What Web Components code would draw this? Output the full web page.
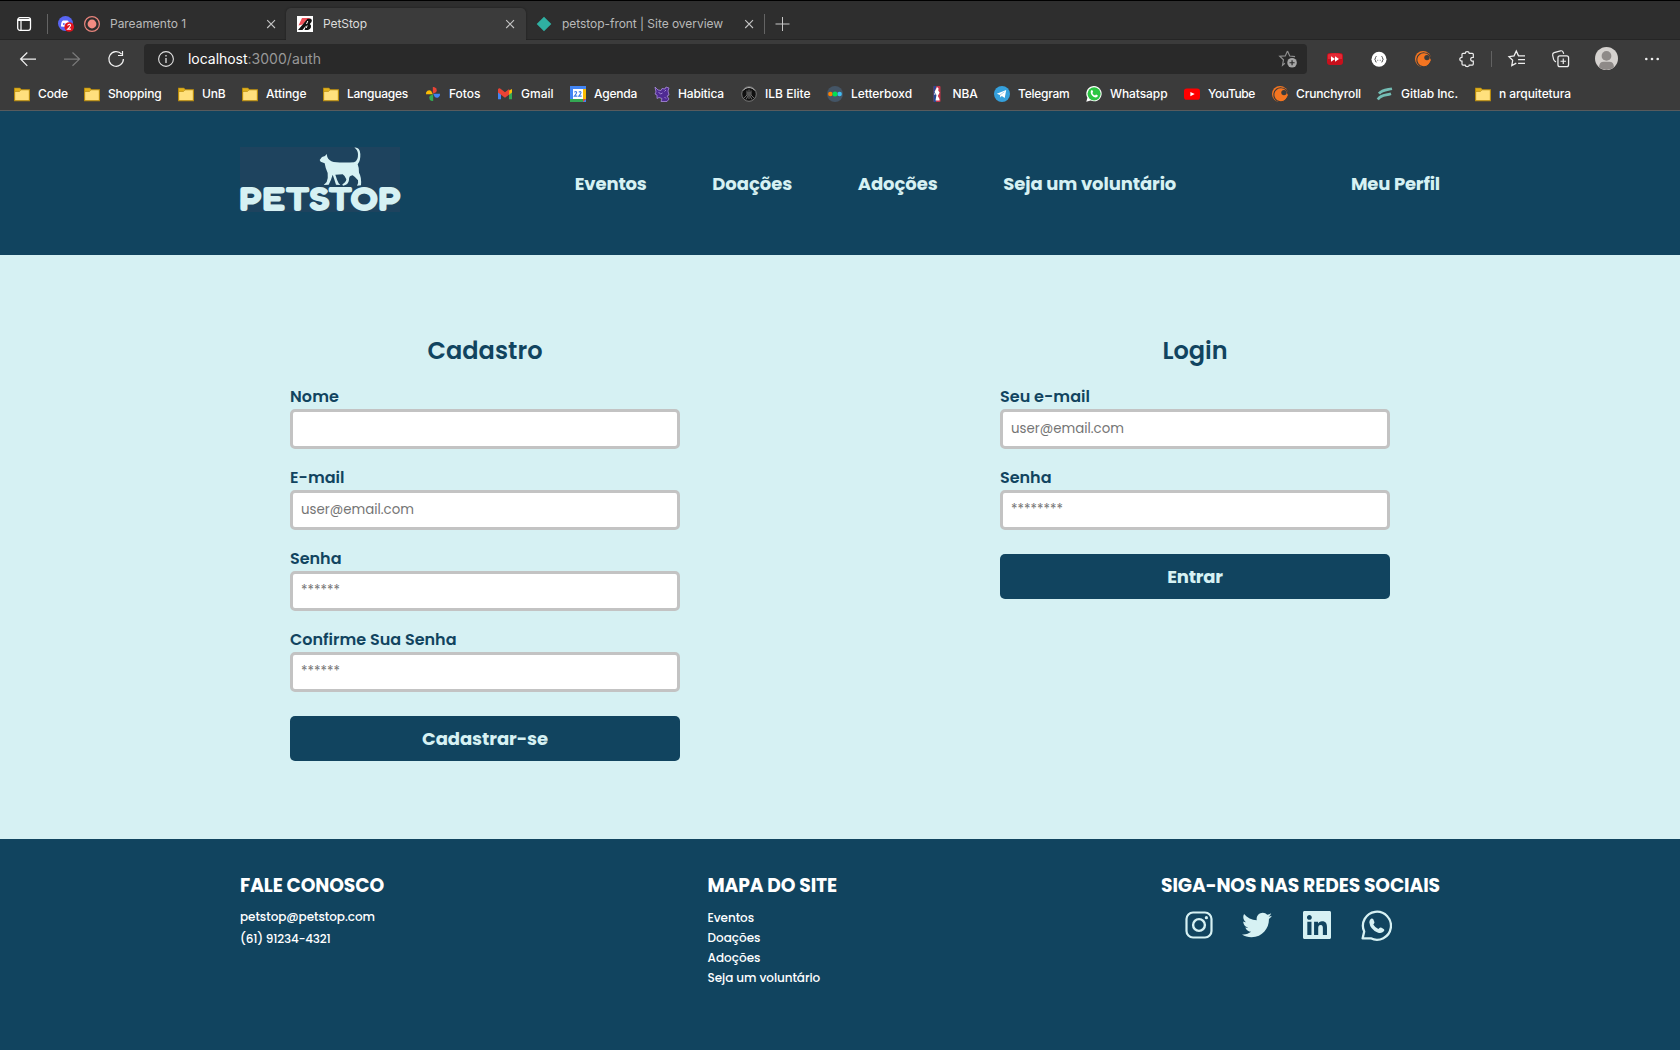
<!DOCTYPE html>
<html lang="pt-BR">
<head>
<meta charset="utf-8">
<title>PetStop</title>
<style>
html,body{margin:0;height:100%;overflow:hidden}
body{font-family:Poppins,Inter,"Open Sans",sans-serif}
</style>
</head>
<body>
<pet-window></pet-window>
<script>
const make = (name, html, after) => customElements.define(name, class extends HTMLElement {
  connectedCallback() {
    if (this.shadowRoot) return;
    this.attachShadow({mode: 'open'}).innerHTML = typeof html === 'function' ? html(this) : html;
    if (after) after(this);
  }
});
const svg = (w, h, body, extra = '') => `<svg width="${w}" height="${h}" viewBox="0 0 ${w} ${h}" fill="none" ${extra}>${body}</svg>`;
const crunchy = '<circle cx="8" cy="8" r="8" fill="#f47521"/><path d="M15.6 10.4A7 7 0 1 1 9.5 1.8a6.7 6.7 0 0 1 6.4 6.8" fill="none" stroke="#3b3b3b" stroke-width="1.1"/><circle cx="9.4" cy="8.8" r="5.8" fill="#f47521"/><circle cx="12" cy="6.6" r="2.7" fill="#3b3b3b"/>';
const icons = {
  folder: '<path d="M.6 2.2h5.2l1.4 1.6h8.2v10.9H.6z" fill="#ffe07d" stroke="#b98b0b" stroke-width="1.1"/><path d="M1 2.6h4.6l1 1.2-1.4 1.5H1z" fill="#e3b21a"/><path d="M1 5.4h4.6l1.3-1.6" stroke="#b98b0b" stroke-width=".8" fill="none"/>',
  fotos: '<path d="M7.800 1a3.300 3.300 0 0 1 3.300 5.200L7.800 7.800z" fill="#ea4335"/><path d="M15 7.800a3.300 3.300 0 0 1-5.200 3.300L8.200 7.800z" fill="#4285f4"/><path d="M8.200 15a3.300 3.300 0 0 1-3.300-5.200L8.200 8.200z" fill="#34a853"/><path d="M1 8.200a3.300 3.300 0 0 1 5.200-3.300L7.800 8.200z" fill="#fbbc04"/>',
  gmail: '<path d="M1 3.5v9.7h3V7z" fill="#4285f4"/><path d="M12 7v6.2h3V3.5z" fill="#34a853"/><path d="M12 4.5l3-1.5v3.4L12 8.8z" fill="#fbbc04"/><path d="M1 3.2c.8-1.2 2-1 2.8-.2L8 6.3l4.2-3.3v5.6L8 11.700 1 6.400z" fill="#ea4335"/>',
  agenda: '<path d="M0 0h16v16H0z" fill="#4285f4"/><path d="M13 3h3v10h-3z" fill="#fbbc04"/><path d="M3 13h10v3H0v-3z" fill="#34a853"/><path d="M13 13h3l-3 3z" fill="#ea4335"/><path d="M3 3h10v10H3z" fill="#fff"/><path d="M4.400 6.200q1.600-1.300 2.200 0 .3 1-2.200 3.900h2.900M8.800 6.200q1.600-1.300 2.200 0 .3 1-2.200 3.900h2.900" stroke="#3f7de8" stroke-width="1.100"/>',
  habitica: '<path d="M1 1l3 3 3 .5 1-2 3 .5 1-2 3 1-1 3 1 4-2 1 2 3-2 2.500H7l1-3-3-1-2 1V9L1 8l1-2z" fill="#4f2a93" stroke="#a98bdc" stroke-width=".8"/><path d="M4.500 6l2 2 2-1M10.500 5.500L12 4M10.500 11l1.500 1.500" stroke="#b59ce2" stroke-width=".8"/>',
  ilb: '<circle cx="8" cy="8" r="7.300" fill="#101010" stroke="#777" /><path d="M2.300 4.500A7 7 0 0 1 13.700 4.500" stroke="#ccc" stroke-width=".9"/><path d="M8 3.500V13M6 4.500V9l-3 3M10 4.500V9l3 3M7 6v4l-2 3.500M9 6v4l2 3.500" stroke="#777" stroke-width=".9"/>',
  letterboxd: '<circle cx="8" cy="8" r="8" fill="#445566"/><circle cx="3.400" cy="8" r="2.300" fill="#ff8000"/><circle cx="12.600" cy="8" r="2.300" fill="#40bcf4"/><circle cx="8" cy="8" r="2.500" fill="#00e054"/>',
  nba: '<rect x="4.500" y="0" width="7" height="16" rx="1" fill="#c8344a"/><path d="M5.500 0h2L6 5l2 5-1 6H5.500q-1 0-1-1V1q0-1 1-1z" fill="#254a95"/><path d="M8 1l1.600 1.500-.4 2 1.400 2-1.800 3.500L10.500 13v1.500H6.500L7.500 9 5.500 6z" fill="#fff"/><circle cx="5.800" cy="8" r=".8" fill="#fff"/>',
  telegram: '<circle cx="8" cy="8" r="8" fill="#35a0dc"/><path d="M2.800 7.700l9.400-3.800-1.500 8.200-2.900-2.100-1.500 1.500-.3-2.600z" fill="#fff"/><path d="M6 8.900l4.400-3" stroke="#8fc6e8" stroke-width=".7"/>',
  whatsapp: '<path d="M.3 15.700l1.100-4A7.700 7.700 0 1 1 4.600 14.600z" fill="#fff"/><circle cx="8.100" cy="7.800" r="6.600" fill="#2bc542"/><path d="M4.800 5.200c1-2 1.800-1 2.300.7l-.8 1.100q1 2 2.700 2.600l1-1c2 .8 2.500 1.200 1 2.500-2.500 1.500-7-2.500-6.200-5.900z" fill="#fff"/>',
  youtube: '<rect x="0" y="2.500" width="16" height="11.200" rx="2.800" fill="#f00"/><path d="M6.400 5.900l4.300 2.200-4.300 2.200z" fill="#fff"/>',
  crunchy,
  gitlab: '<path d="M2 7.600C5 3.800 9 4 15 2.700M.8 13.400c3.500-5.200 8-3.700 13.200-5.600" stroke="#74bdb5" stroke-width="2.700"/>',
  discord: '<circle cx="7.500" cy="7.500" r="7.500" fill="#5865f2"/><path d="M3 10.500Q3 5.500 5 4.600h4.600Q11.500 6 11.800 9L8 11z" fill="#fff"/><circle cx="5.800" cy="8" r="1" fill="#5865f2"/><circle cx="11.200" cy="11" r="4.800" fill="#e0131d"/><path d="M9.700 9.600q.3-1.400 1.700-1.300 1.400.3 1 1.600-.5 1.200-2.700 3.200h3.200" stroke="#fff" stroke-width="1.100" fill="none"/>',
  record: '<circle cx="8" cy="8" r="7.400" stroke="#e8847c" stroke-width="1.200"/><circle cx="8" cy="8" r="4.400" fill="#f28b82"/>',
  bstone: '<path d="M0 0h16v16H0z" fill="#fff"/><path d="M5 2h8.500L9 5.500 5.500 8.500 1.500 9.500z" fill="#f0515a"/><path d="M10.500 2.800H14Q15.500 4 14.500 6L12.800 8q1.700 1 1.200 3.200Q13 14 11 14H7.500l1.600-4.500L5.500 14H1z" fill="#111"/><path d="M10.800 5L9.500 8M10.200 9.500L9.200 12" stroke="#fff" stroke-width="1"/>',
  diamond: '<path d="M8 .7L15.300 8 8 15.300.7 8z" fill="#2fb0a2"/>',
  close: '<path d="M4.200 4.200l7.800 7.800M12 4.200L4.200 12" stroke="#c4c4c4" stroke-width="1.100"/>',
  plus: '<path d="M7.500 1v14M.5 8h14" stroke="#c8c8c8" stroke-width="1"/>',
  panel: '<rect x="1.700" y="1.700" width="12.800" height="12.600" rx="2.200" stroke="#fff" stroke-width="1.300"/><path d="M2 3h12v2H2z" fill="#fff"/><path d="M5 4v10" stroke="#fff" stroke-width="1.200"/>',
  back: '<path d="M7.300 1.500L.6 8l6.700 6.800M.6 8.200h15.400" stroke="#f2f2f2" stroke-width="1.200"/>',
  forward: '<path d="M8.500 1.500l7 6.600-7 6.700M15.500 8.200H0" stroke="#7b7b7b" stroke-width="1.200"/>',
  reload: '<path d="M13.600 3.200A7.300 7.300 0 1 0 15.400 8M14.500 0v4.500H10" stroke="#f2f2f2" stroke-width="1.200"/>',
  info: '<circle cx="8" cy="8" r="7.400" stroke="#e0e0e0" stroke-width="1.100"/><path d="M8 7v5M8 4v1.500" stroke="#d5d5d5" stroke-width="1.400"/>',
  star: '<path d="M8 1l2.100 4.700 5 .6M5.500 12.500L3.300 14.300l.9-5.100L.7 5.900l5.200-.3L8 1" stroke="#8f8f8f" stroke-width="1.100"/><circle cx="12.300" cy="12" r="4.500" fill="#a6a6a6"/><path d="M12.300 9.600v4.800M9.900 12h4.800" stroke="#292929" stroke-width="1.100"/>',
  ff: '<rect y="2" width="16" height="12" rx="3" fill="#c8101c"/><path d="M1 3.500Q8 1 15 3.500V8H1z" fill="#ee3541" opacity=".7"/><path d="M4 5.300l4 2.700-4 2.700zM8 5.300L12 8l-4 2.700z" fill="#fff"/>',
  json: '<circle cx="8" cy="8.300" r="7.500" fill="#fff"/><path d="M5.600 5.500q-1.300 0-1.100 1.200 0 1.600-.9 1.600.9 0 .9 1.600-.2 1.200 1.100 1.200M10.400 5.500q1.300 0 1.100 1.200 0 1.600.9 1.600-.9 0-.9 1.600.2 1.200-1.100 1.200M6.400 9.300h.8M8.800 9.300h.8" stroke="#555" stroke-width="1"/>',
  puzzle: '<path d="M4 2.300h2.200q.1-1.600 2-1.600t2 1.600h3.100q1 0 1 1v3q-2.600-.2-2.600 1.900t2.600 1.900v3q0 1-1 1h-3q0 1.500-2 1.500t-2.100-1.500H4q-1 0-1-1v-3Q.8 10 .8 8.200T3 6.300v-3q0-1 1-1z" stroke="#eee" stroke-width="1.200"/>',
  favs: '<path d="M9.800 5.300L7.800 1 5.700 5.500.9 6.200l3.500 3.500-.8 4.900 4.200-2.300M9.500 5.600h6.500M9.500 9H16M9.500 12.500H16" stroke="#eee" stroke-width="1.200"/>',
  collections: '<rect x="5.600" y="5.600" width="10" height="10" rx="1.800" stroke="#eee" stroke-width="1.200"/><path d="M10.600 8v5.200M8 10.600h5.200M3.800 11.200Q2 10.600 1.500 8.800L.6 4.800Q.4 3 2 2.500L8 .8q1.900-.4 2.500 1.300l.5 1.600" stroke="#eee" stroke-width="1.100"/>',
  avatar: '<circle cx="8" cy="8" r="8" fill="#d5d2cf"/><circle cx="8" cy="6.200" r="3.400" fill="#8e8a88"/><path d="M2.800 14Q3 10.200 6 10.200h4Q13 10.200 13.200 14 8 18 2.800 14z" fill="#8e8a88"/>',
  dots: '<circle cx="2.300" cy="8" r="1.300" fill="#eee"/><circle cx="8" cy="8" r="1.300" fill="#eee"/><circle cx="13.700" cy="8" r="1.300" fill="#eee"/>'
};
const ic = (n, ml = 0, s = 16) => `<ui-icon name="${n}" size="${s}" style="margin-left:${ml}px"></ui-icon>`;
const fit = (t, w, ml = 0) => `<fit-text w="${w}" style="margin-left:${ml}px">${t}</fit-text>`;

make('tab-strip', `<style>
:host{display:flex;height:39px;background:#2e2e2e;font:400 12px Inter,sans-serif;color:#b9b9b9;box-shadow:inset 0 -1px #252525}
.t{display:flex;align-items:center;height:32px;margin-top:7px;box-sizing:border-box;padding-bottom:1px}
.a{width:240px;height:32px;background:#3b3b3b;border-radius:5px 5px 0 0;color:#dcdcdc;box-shadow:0 0 2px #1c1c1c;clip-path:inset(-3px -3px 0 -3px)}
i{width:1px;height:20px;background:#646464}
</style>
<div class="t" style="width:286px">${ic('panel',16)}<i style="margin-left:15px"></i>${ic('discord',10)}${ic('record',10)}${fit('Pareamento 1',76,10)}${ic('close',76.500)}</div>
<div class="t a">${ic('bstone',11)}${fit('PetStop',44,10)}${ic('close',134.500)}</div>
<div class="t">${ic('diamond',10)}${fit('petstop-front | Site overview',161,10)}${ic('close',17.500)}<i style="margin-left:7.500px"></i>${ic('plus',10)}</div>`);

make('nav-bar', `<style>
:host{display:flex;align-items:center;box-sizing:border-box;height:38px;padding-bottom:1px;background:#3b3b3b;font:400 14px Inter,sans-serif}
.o{display:flex;align-items:center;width:1163px;height:30px;border-radius:4px;background:#292929;margin-left:20px;color:#fff}
.g{color:#989898}i{width:1px;height:16px;background:#626262;margin-left:15px}
</style>
${ic('back',20)}${ic('forward',28)}${ic('reload',28)}
<div class="o">${ic('info',14)}${fit('localhost',59.500,14)}<span class="g">${fit(':3000/auth',73.500)}</span><ui-icon name="star" size="17" style="margin-left:auto;margin-right:11px"></ui-icon></div>
${ic('ff',20)}${ic('json',28)}${ic('crunchy',28)}${ic('puzzle',28)}<i style="margin-left:16px"></i>${ic('favs',16,17)}${ic('collections',26.500,17)}${ic('avatar',26,23)}${ic('dots',26)}`);

const marks = [['folder','Code',14,30],['folder','Shopping',84,53.500],['folder','UnB',178,23.500],['folder','Attinge',242,40.500],['folder','Languages',323,61],['fotos','Fotos',425,31.500],['gmail','Gmail',497,32.500],['agenda','Agenda',570,43],['habitica','Habitica',654,46],['ilb','ILB Elite',741,45.500],['letterboxd','Letterboxd',827,61],['nba','NBA',928.500,25],['telegram','Telegram',994,51.500],['whatsapp','Whatsapp',1086,57.500],['youtube','YouTube',1184,47],['crunchy','Crunchyroll',1272,65],['gitlab','Gitlab Inc.',1377,57],['folder','n arquitetura',1475,72]];
make('bookmark-bar', `<style>
:host{display:flex;align-items:center;height:33px;padding:0 0 1px 14px;box-sizing:border-box;background:#3b3b3b;border-bottom:1px solid #585b5d;color:#fff;font:500 12px Inter,sans-serif}
a{display:flex;align-items:center;flex:none}
</style>${marks.map((m, i) => `<a style="width:${(marks[i + 1] ? marks[i + 1][2] : 1600) - m[2]}px">${ic(m[0])}${fit(m[1], m[3], 8)}</a>`).join('')}`);

make('pet-logo', `<style>:host{display:block;width:160px;height:65px}svg{display:block;overflow:visible}</style>
<svg width="160" height="65" viewBox="60 51 480 195"><path fill="#1e435e" d="M60 51h480v195H60z"/>
<path fill="#d6f1f3" d="M299 90l7-9 9-3 5-6 2 9q4 11 19 15 30 3 61 1 13-5 12-25-1-14-11-19 16-2 18 19 1 20-8 31 5 12 4 25 8 13 6 38l-12 1q5-6 3-16-8-10-16-15-12 1-11 14-2 15-18 17l-2-4q11-6 12-15-3-10-11-15l-22 1q5 16 10 26l5 5-13-1q-5-17-10-30-4 15-12 30l-15 1 9-9q5-13 3-27-7-15-9-29l-12-5z"/>
<text x="57" y="243" font-family="Fredoka,Nunito,Inter,sans-serif" font-weight="700" font-size="106" textLength="486" lengthAdjust="spacingAndGlyphs" fill="#d6f1f3">PETSTOP</text></svg>`);

make('site-header', `<style>
:host{display:flex;align-items:center;justify-content:space-between;height:144px;padding:0 240px;background:#11445f;color:#d6f1f3;font-size:18px;font-weight:700}
nav{display:flex;gap:65.500px}
</style><pet-logo style="margin-top:-7px"></pet-logo><nav>${fit('Eventos',72)}${fit('Doações',80)}${fit('Adoções',80)}${fit('Seja um voluntário',173)}</nav>${fit('Meu Perfil',89)}`);

make('form-field', el => `<style>
:host{display:block;height:81px;color:#11445f}
label{display:block;box-sizing:border-box;padding-top:2px;font-size:16px;font-weight:600;line-height:24px;height:26px}
.box{display:flex;box-sizing:border-box;height:40px;border:3px solid #c3c3c3;border-radius:5px;background:#fff;padding-left:8px;font-size:13.333px;line-height:34px;color:#757575}
</style><label>${fit(el.getAttribute('label'), el.getAttribute('lw'))}</label><div class="box" role="textbox">${el.hasAttribute('hint') ? fit(el.getAttribute('hint'), el.getAttribute('hw')) : ''}</div>`);

make('submit-button', `<style>
:host{display:flex;align-items:center;justify-content:center;height:45px;border-radius:5px;margin-top:9px;background:#11445f;color:#d6f1f3;font-size:18px;font-weight:700}
</style><slot></slot>`);

make('auth-form', `<style>
:host{display:block;width:390px;color:#11445f}
h2{display:flex;justify-content:center;margin:0 0 17px;padding-top:1px;font-size:24px;font-weight:600;line-height:30px}
</style><h2><slot name="title"></slot></h2><slot></slot>`);

make('auth-page', `<style>
:host{display:flex;justify-content:space-between;box-sizing:border-box;height:584px;padding:80px 290px 0;background:#d6f1f3}
</style>
<auth-form><fit-text slot="title" w="115">Cadastro</fit-text>
<form-field label="Nome" lw="49"></form-field>
<form-field label="E-mail" lw="54.5" hint="user@email.com" hw="113"></form-field>
<form-field label="Senha" lw="51.5" hint="******" hw="39"></form-field>
<form-field label="Confirme Sua Senha" lw="166.5" hint="******" hw="39"></form-field>
<submit-button>${fit('Cadastrar-se',126)}</submit-button></auth-form>
<auth-form><fit-text slot="title" w="65">Login</fit-text>
<form-field label="Seu e-mail" lw="90" hint="user@email.com" hw="113"></form-field>
<form-field label="Senha" lw="51.5" hint="********" hw="52"></form-field>
<submit-button>${fit('Entrar',55.5)}</submit-button></auth-form>`);

make('social-links', `<style>:host{display:flex;align-items:center;height:32px;color:#d6f1f3}svg{display:block;flex:none}</style>
${svg(28,28,'<rect x="1.500" y="1.500" width="25" height="25" rx="6.500" stroke="currentColor" stroke-width="2.200"/><circle cx="14" cy="14" r="5.900" stroke="currentColor" stroke-width="2.400"/><circle cx="21.400" cy="6.700" r="1.600" fill="currentColor"/>','style="margin-right:29px"')}
<svg width="30" height="30" viewBox="0 0 512 512" style="margin-right:31px"><path fill="currentColor" d="M459.370 151.716c.325 4.548.325 9.097.325 13.645 0 138.720-105.583 298.558-298.558 298.558-59.452 0-114.680-17.219-161.137-47.106 8.447.974 16.568 1.299 25.340 1.299 49.055 0 94.213-16.568 130.274-44.832-46.132-.975-84.792-31.188-98.112-72.772 6.498.974 12.995 1.624 19.818 1.624 9.421 0 18.843-1.300 27.614-3.573-48.081-9.747-84.143-51.980-84.143-102.985v-1.299c13.969 7.797 30.214 12.670 47.431 13.319-28.264-18.843-46.781-51.005-46.781-87.391 0-19.492 5.197-37.360 14.294-52.954 51.655 63.675 129.300 105.258 216.365 109.807-1.624-7.797-2.599-15.918-2.599-24.040 0-57.828 46.782-104.934 104.934-104.934 30.213 0 57.502 12.670 76.670 33.137 23.715-4.548 46.456-13.320 66.599-25.340-7.798 24.366-24.366 44.833-46.132 57.827 21.117-2.273 41.584-8.122 60.426-16.243-14.292 20.791-32.161 39.308-52.628 54.253z"/></svg>
<svg width="28" height="28" viewBox="0 32 448 448" style="margin-right:29.500px"><path fill="currentColor" d="M424 32H24C10 32 0 42 0 56v400c0 14 10 24 24 24h400c14 0 24-10 24-24V56c0-14-10-24-24-24zM135.400 416H69V202.200h66.500V416zm-33.200-243c-21.300 0-38.500-17.300-38.500-38.500S80.900 96 102.200 96c21.200 0 38.500 17.300 38.500 38.500 0 21.300-17.200 38.500-38.500 38.500zm282.100 243h-66.400V312c0-24.800-.5-56.700-34.500-56.700-34.600 0-39.900 27-39.900 54.900V416h-66.400V202.200h63.700v29.200h.9c8.900-16.800 30.600-34.500 62.200-34.500 66.500 0 79.900 43.800 79.900 100.900V416z"/></svg>
${svg(31,31,'<path d="M3.200 21.500A14 14 0 1 1 9.800 28.300L1.600 28.400Z" stroke="currentColor" stroke-width="2.300" stroke-linejoin="round"/><path d="M8.300 12.200C8.800 8.700 11 7.600 12.300 9.300L13.500 12.300Q13.500 13.300 12.300 14.500 14.200 17.800 17.300 18.900L18.800 17.700Q19.700 17.200 20.600 17.700L23 19.200Q23.800 20 22.800 21.300 20.500 23.800 16.600 22.400 9.200 19.500 8.300 12.200z" fill="currentColor"/>')}`);

make('site-footer', `<style>
:host{display:flex;justify-content:space-between;box-sizing:border-box;height:211px;padding:32px 240px 0;background:#11445f;color:#fff;font-size:12px;font-weight:500}
h3{margin:0;font-size:18.720px;font-weight:700;line-height:29px;height:37px}
p{margin:0;height:22px;line-height:18px}li{height:20px;line-height:20px}ul{margin:0;padding:0;list-style:none}
.s h3{height:36px}
</style>
<div style="width:144px"><h3>${fit('FALE CONOSCO',144)}</h3><p>${fit('petstop@petstop.com',135)}</p><p>${fit('(61) 91234-4321',90.500)}</p></div>
<div style="width:130px"><h3>${fit('MAPA DO SITE',129.500)}</h3><ul><li>${fit('Eventos',46.500)}</li><li>${fit('Doações',53)}</li><li>${fit('Adoções',53)}</li><li>${fit('Seja um voluntário',112.700)}</li></ul></div>
<div class="s" style="width:279px"><h3 style="white-space:nowrap">${fit('SIGA-NOS NAS REDES SOCIAIS',279)}</h3><social-links style="margin:2px 0 0 24px"></social-links></div>`);

make('pet-window', `<style>:host{display:flex;flex-direction:column;height:1050px;width:1680px;overflow:hidden;border-top:1px solid #000;box-sizing:border-box}:host>*{flex:none}</style>
<tab-strip></tab-strip><nav-bar></nav-bar><bookmark-bar></bookmark-bar><site-header></site-header><auth-page></auth-page><site-footer></site-footer>`);

make('ui-icon', el => { const s = el.getAttribute('size') || 16; return `<style>:host{display:block;flex:none;width:${s}px;height:${s}px}svg{display:block;overflow:visible}</style><svg width="${s}" height="${s}" viewBox="0 0 16 16" fill="none">${icons[el.getAttribute('name')]}</svg>`; });

/* Spreads letter spacing so that a run of text takes exactly the width asked for. */
make('fit-text', el => `<style>:host{display:inline-block;flex:none;white-space:nowrap;width:${el.getAttribute('w')}px}span{display:inline-block}</style><span><slot></slot></span>`, el => {
  const s = el.shadowRoot.querySelector('span');
  const n = el.textContent.length, d = +el.getAttribute('w') - s.getBoundingClientRect().width;
  s.style.letterSpacing = (d / n).toFixed(3) + 'px';
});
</script>
</body>
</html>
